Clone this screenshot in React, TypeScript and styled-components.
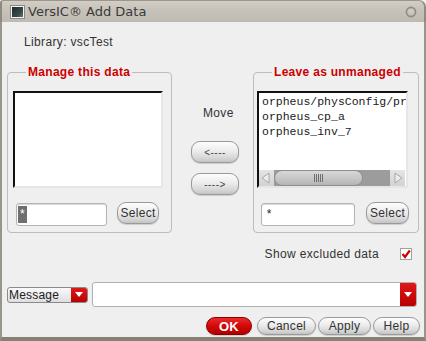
import styled, { createGlobalStyle } from 'styled-components';

const GlobalStyle = createGlobalStyle`
    html, body {
        margin: 0;
        padding: 0;
        background: #efefef;
    }
    * {
        box-sizing: border-box;
    }
`;

const Window = styled.div`
    width: 426px;
    height: 341px;
    display: flex;
    flex-direction: column;
    font-family: 'Liberation Sans', Arial, sans-serif;
    font-size: 12px;
    letter-spacing: 0.35px;
    color: #333;
`;

const TitleBar = styled.div`
    height: 22px;
    display: flex;
    align-items: center;
    padding: 0 7px 0 9px;
    background: linear-gradient(#d2cdc5, #c8c3ba 40%, #c0bbb2);
    border-top: 1px solid #9c978d;
    border-left: 2px solid #8f8a80;
    border-right: 2px solid #8f8a80;
    border-radius: 3px 7px 0 0;
`;

const TitleIcon = styled.span`
    width: 13px;
    height: 12px;
    margin-top: 1px;
    background: linear-gradient(135deg, #1f2a2a, #3c4c4c 70%, #6c7878);
    border: 1px solid #f2f2f2;
    box-shadow: 0 0 0 1px #8a8a8a;
`;

const TitleText = styled.span`
    margin-left: 4px;
    font-family: 'DejaVu Sans', sans-serif;
    font-size: 13px;
    letter-spacing: 0;
    color: #3a3a3a;
    flex: 1;
`;

const Body = styled.div`
    flex: 1;
    display: flex;
    flex-direction: column;
    background: #efefef;
    border-left: 2px solid #9a958b;
    border-right: 2px solid #9a958b;
    border-bottom: 4px solid #858176;
    padding-top: 13px;
`;

const LibraryLabel = styled.div`
    height: 14px;
    line-height: 14px;
    padding-left: 22px;
`;

const MainRow = styled.div`
    display: flex;
    margin-top: 16px;
    padding-left: 5px;
`;

const Group = styled.fieldset<{ $width: number }>`
    width: ${p => p.$width}px;
    height: 168px;
    margin: 0;
    padding: 0 0 6px 0;
    min-width: 0;
    border: 1px solid #bdbdbd;
    border-radius: 4px;
    display: flex;
    flex-direction: column;
`;

const Legend = styled.legend`
    margin-left: 18px;
    padding: 0 2px;
    height: 15px;
    line-height: 15px;
    font-weight: bold;
    font-size: 12px;
    letter-spacing: 0.3px;
    color: #cc0000;
`;

const ListBox = styled.div<{ $left: number; $width: number }>`
    margin-top: 11px;
    margin-left: ${p => p.$left}px;
    width: ${p => p.$width}px;
    height: 97px;
    background: #fff;
    border-top: 2px solid #111;
    border-left: 2px solid #111;
    border-right: 2px solid #e6e6e6;
    border-bottom: 2px solid #e6e6e6;
    display: flex;
    flex-direction: column;
    overflow: hidden;
`;

const ListItems = styled.div`
    flex: 1;
    padding: 1px 0 0 3px;
    font-family: 'Liberation Mono', 'Courier New', monospace;
    font-size: 11.5px;
    letter-spacing: 0;
    line-height: 15px;
    color: #1a1a1a;
    white-space: nowrap;
    overflow: hidden;
`;

const ScrollBar = styled.div`
    height: 16px;
    display: flex;
    background: #9c9c9c;
    margin-right: 1px;
`;

const ScrollArrow = styled.div`
    width: 15px;
    height: 16px;
    background: linear-gradient(#e4e4e4, #d2d2d2);
    display: flex;
    align-items: center;
    justify-content: center;
`;

const ScrollThumb = styled.div`
    width: 89px;
    height: 16px;
    border: 1px solid #8e8e8e;
    border-radius: 8px;
    background: linear-gradient(#d8d8d8, #c4c4c4 60%, #b4b4b4);
    display: flex;
    align-items: center;
    justify-content: center;
`;

const ScrollTrack = styled.div`
    flex: 1;
`;

const InputRow = styled.div<{ $left: number; $gap: number }>`
    display: flex;
    align-items: flex-start;
    margin-top: 14px;
    padding-left: ${p => p.$left}px;
    gap: ${p => p.$gap}px;
`;

const TextField = styled.div<{ $width: number }>`
    width: ${p => p.$width}px;
    height: 23px;
    margin-top: 1px;
    background: #fff;
    border: 1px solid #b4b4b4;
    border-radius: 3px;
    box-shadow: inset 0 1px 1px #d8d8d8;
    padding: 2px 0 0 1px;
    font-size: 12px;
    line-height: 16px;
    color: #222;
`;

const Selected = styled.span`
    display: inline-block;
    background: #6f6f6f;
    color: #fff;
    padding: 0 2px;
    height: 17px;
`;

const Button = styled.button<{ $width: number; $height?: number }>`
    width: ${p => p.$width}px;
    height: ${p => p.$height || 22}px;
    padding: 0;
    border: 1px solid #9a9a9a;
    border-radius: 9px;
    background: linear-gradient(#fdfdfd, #ececec 45%, #d6d6d6 80%, #c4c4c4);
    font-family: 'Liberation Sans', Arial, sans-serif;
    font-size: 12px;
    letter-spacing: 0.3px;
    color: #333;
    box-shadow: 0 1px 1px rgba(0, 0, 0, 0.15);
`;

const OkButton = styled(Button)`
    border-color: #8a0000;
    background: linear-gradient(#ec2a2a, #d40808 50%, #b00000);
    color: #fff;
    font-weight: bold;
    font-size: 13px;
`;

const ArrowButton = styled(Button)`
    font-size: 10px;
    letter-spacing: 0.5px;
    color: #444;
`;

const MiddleColumn = styled.div`
    width: 81px;
    display: flex;
    flex-direction: column;
    align-items: flex-start;
    padding: 41px 0 0 19px;
`;

const MoveLabel = styled.div`
    margin-left: 12px;
    height: 14px;
    line-height: 14px;
    margin-bottom: 21px;
`;

const ArrowStack = styled.div`
    display: flex;
    flex-direction: column;
    gap: 10px;
`;

const OptionRow = styled.div`
    display: flex;
    justify-content: flex-end;
    align-items: center;
    height: 12px;
    margin-top: 15px;
    padding-right: 12px;
    gap: 21px;
`;

const CheckBox = styled.div`
    width: 12px;
    height: 12px;
    background: #fff;
    border: 1px solid #a0a0a0;
    display: flex;
    align-items: center;
    justify-content: center;
`;

const MessageRow = styled.div`
    display: flex;
    align-items: center;
    margin-top: 22px;
    padding-left: 5px;
    gap: 4px;
    height: 25px;
`;

const Dropdown = styled.div`
    width: 81px;
    height: 16px;
    display: flex;
    border: 1px solid #8a8a8a;
    border-radius: 3px;
    background: linear-gradient(#fafafa, #dedede);
    overflow: hidden;
`;

const DropdownLabel = styled.div`
    flex: 1;
    padding-left: 1px;
    font-size: 12px;
    line-height: 14px;
    letter-spacing: 0.2px;
    color: #222;
`;

const RedArrow = styled.div<{ $width: number }>`
    width: ${p => p.$width}px;
    background: linear-gradient(#e01818, #b80000);
    display: flex;
    align-items: center;
    justify-content: center;
`;

const ComboField = styled.div`
    width: 325px;
    height: 25px;
    display: flex;
    background: #fff;
    border: 1px solid #b0b0b0;
    border-radius: 3px;
    overflow: hidden;
`;

const ComboInput = styled.div`
    flex: 1;
`;

const ButtonRow = styled.div`
    display: flex;
    justify-content: flex-end;
    margin-top: 10px;
    padding-right: 4px;
    gap: 2px;
`;

function DownTriangle() {
    return (
        <svg width="8" height="5" viewBox="0 0 8 5">
            <polygon points="0,0 8,0 4,5" fill="#fff" />
        </svg>
    );
}

function ArrowGlyph({ dir }: { dir: 'left' | 'right' }) {
    const pts = dir === 'left' ? '9,2 9,12 2,7' : '4,2 4,12 11,7';
    return (
        <svg width="13" height="14" viewBox="0 0 13 14">
            <polygon points={pts} fill="#ececec" stroke="#a8a8a8" strokeWidth="1" />
        </svg>
    );
}

function Grip() {
    return (
        <svg width="9" height="8" viewBox="0 0 9 8">
            {[0.5, 2.5, 4.5, 6.5, 8.5].map(x => (
                <line key={x} x1={x} y1="0" x2={x} y2="8" stroke="#6e6e6e" strokeWidth="1" />
            ))}
        </svg>
    );
}

export default function App() {
    return (
        <Window>
            <GlobalStyle />
            <TitleBar>
                <TitleIcon />
                <TitleText>VersIC® Add Data</TitleText>
                <svg width="12" height="12" viewBox="0 0 12 12">
                    <defs>
                        <radialGradient id="cb" cx="50%" cy="40%" r="60%">
                            <stop offset="0%" stopColor="#d4d0c8" />
                            <stop offset="100%" stopColor="#bdb8af" />
                        </radialGradient>
                    </defs>
                    <circle cx="6" cy="6" r="4.6" fill="url(#cb)" stroke="#8e8b85" strokeWidth="1.6" />
                </svg>
            </TitleBar>
            <Body>
                <LibraryLabel>Library: vscTest</LibraryLabel>
                <MainRow>
                    <Group $width={165}>
                        <Legend>Manage this data</Legend>
                        <ListBox $left={5} $width={150} />
                        <InputRow $left={8} $gap={10}>
                            <TextField $width={91}>
                                <Selected>*</Selected>
                            </TextField>
                            <Button $width={42}>Select</Button>
                        </InputRow>
                    </Group>
                    <MiddleColumn>
                        <MoveLabel>Move</MoveLabel>
                        <ArrowStack>
                            <ArrowButton $width={48}>&lt;----</ArrowButton>
                            <ArrowButton $width={48}>----&gt;</ArrowButton>
                        </ArrowStack>
                    </MiddleColumn>
                    <Group $width={166}>
                        <Legend>Leave as unmanaged</Legend>
                        <ListBox $left={3} $width={151}>
                            <ListItems>
                                <div>orpheus/physConfig/pr</div>
                                <div>orpheus_cp_a</div>
                                <div>orpheus_inv_7</div>
                            </ListItems>
                            <ScrollBar>
                                <ScrollArrow>
                                    <ArrowGlyph dir="left" />
                                </ScrollArrow>
                                <ScrollThumb>
                                    <Grip />
                                </ScrollThumb>
                                <ScrollTrack />
                                <ScrollArrow>
                                    <ArrowGlyph dir="right" />
                                </ScrollArrow>
                            </ScrollBar>
                        </ListBox>
                        <InputRow $left={7} $gap={11}>
                            <TextField $width={94}>&nbsp;*</TextField>
                            <Button $width={43}>Select</Button>
                        </InputRow>
                    </Group>
                </MainRow>
                <OptionRow>
                    <span>Show excluded data</span>
                    <CheckBox>
                        <svg width="10" height="10" viewBox="0 0 10 10">
                            <path d="M1.5 5 L4 8 L8.8 1.5" fill="none" stroke="#cc0000" strokeWidth="2.2" />
                        </svg>
                    </CheckBox>
                </OptionRow>
                <MessageRow>
                    <Dropdown>
                        <DropdownLabel>Message</DropdownLabel>
                        <RedArrow $width={16}>
                            <DownTriangle />
                        </RedArrow>
                    </Dropdown>
                    <ComboField>
                        <ComboInput />
                        <RedArrow $width={16}>
                            <DownTriangle />
                        </RedArrow>
                    </ComboField>
                </MessageRow>
                <ButtonRow>
                    <OkButton $width={46} $height={18} style={{ marginRight: 3 }}>OK</OkButton>
                    <Button $width={59} $height={18}>Cancel</Button>
                    <Button $width={53} $height={18}>Apply</Button>
                    <Button $width={47} $height={18}>Help</Button>
                </ButtonRow>
            </Body>
        </Window>
    );
}
